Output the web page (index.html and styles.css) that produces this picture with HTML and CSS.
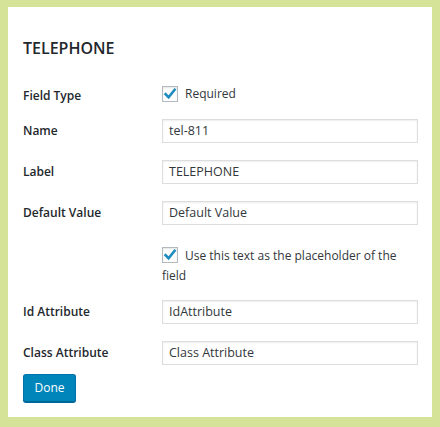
FILE: index.html
```html
<!DOCTYPE html>
<html>
<head>
<meta charset="utf-8">
<link rel="stylesheet" href="styles.css">
</head>
<body>
<div class="panel">
  <h2 class="title">TELEPHONE</h2>
  <div class="form">
    <div class="row row-type">
      <div class="label label-type">Field Type</div>
      <label class="check">
        <span class="box"><svg viewBox="0 0 16 16" width="16" height="16"><path d="M3.6 8.2 L6.6 11.2 L12.6 3.8" fill="none" stroke="#1e8cbe" stroke-width="2.6" stroke-linecap="square" stroke-linejoin="miter"/></svg></span>
        <span class="check-text">Required</span>
      </label>
    </div>
    <div class="row">
      <div class="label">Name</div>
      <div class="input">tel-811</div>
    </div>
    <div class="row">
      <div class="label">Label</div>
      <div class="input">TELEPHONE</div>
    </div>
    <div class="row">
      <div class="label">Default Value</div>
      <div class="input">Default Value</div>
    </div>
    <div class="row row-ph">
      <div class="label"></div>
      <div class="ph">
        <span class="box box-inline"><svg viewBox="0 0 16 16" width="16" height="16"><path d="M3.6 8.2 L6.6 11.2 L12.6 3.8" fill="none" stroke="#1e8cbe" stroke-width="2.6" stroke-linecap="square" stroke-linejoin="miter"/></svg></span>Use this text as the placeholder of the field
      </div>
    </div>
    <div class="row">
      <div class="label">Id Attribute</div>
      <div class="input">IdAttribute</div>
    </div>
    <div class="row">
      <div class="label">Class Attribute</div>
      <div class="input">Class Attribute</div>
    </div>
  </div>
  <button class="done">Done</button>
</div>
</body>
</html>
```
FILE: styles.css
```css
html, body {
  margin: 0;
  padding: 0;
}
body {
  background: #d5e399;
  padding: 7px 8px 10px 8px;
  font-family: "Open Sans", "Noto Sans", sans-serif;
  color: #23282d;
}
.panel {
  background: #ffffff;
  height: 410px;
  box-sizing: border-box;
  padding: 31px 15px 0 15px;
}
.title {
  margin: 0;
  font-size: 16px;
  line-height: 20px;
  font-weight: 600;
  color: #23282d;
}
.form {
  margin-top: 24px;
  display: flex;
  flex-direction: column;
  gap: 17px;
}
.row {
  display: grid;
  grid-template-columns: 139px 256px;
  align-items: center;
}
.label {
  font-size: 12px;
  font-weight: 600;
  line-height: 20px;
  color: #23282d;
}
.label-type {
  padding-top: 4px;
}
.row-type {
  height: 20px;
  align-items: start;
}
.check {
  display: flex;
  align-items: center;
  height: 20px;
  margin-top: 2px;
}
.box {
  width: 16px;
  height: 16px;
  box-sizing: border-box;
  border: 1px solid #b4b9be;
  background: #fff;
  box-shadow: inset 0 1px 2px rgba(0,0,0,0.1);
  display: inline-flex;
  align-items: center;
  justify-content: center;
  flex: none;
}
.box svg {
  display: block;
  margin: -1px;
}
.check-text {
  margin-left: 7px;
  font-size: 12px;
  line-height: 20px;
  color: #32373c;
}
.input {
  height: 24px;
  box-sizing: border-box;
  border: 1px solid #dddddd;
  box-shadow: inset 0 1px 2px rgba(0,0,0,0.07);
  padding: 0 6px;
  font-size: 12.5px;
  line-height: 22px;
  color: #32373c;
  background: #fff;
}
.row-ph {
  margin-top: 4px;
  margin-bottom: -3px;
}
.ph {
  font-size: 12px;
  line-height: 20px;
  color: #32373c;
}
.box-inline {
  vertical-align: -3px;
  margin-right: 7px;
}
.done {
  margin-top: 9px;
  display: block;
  width: 53px;
  height: 28px;
  padding: 0;
  background: #0085ba;
  border: 1px solid #0073aa;
  border-bottom-color: #006799;
  border-radius: 3px;
  box-shadow: 0 1px 0 #006799;
  color: #ffffff;
  font-family: "Open Sans", "Noto Sans", sans-serif;
  font-size: 12px;
  line-height: 24px;
}
```
